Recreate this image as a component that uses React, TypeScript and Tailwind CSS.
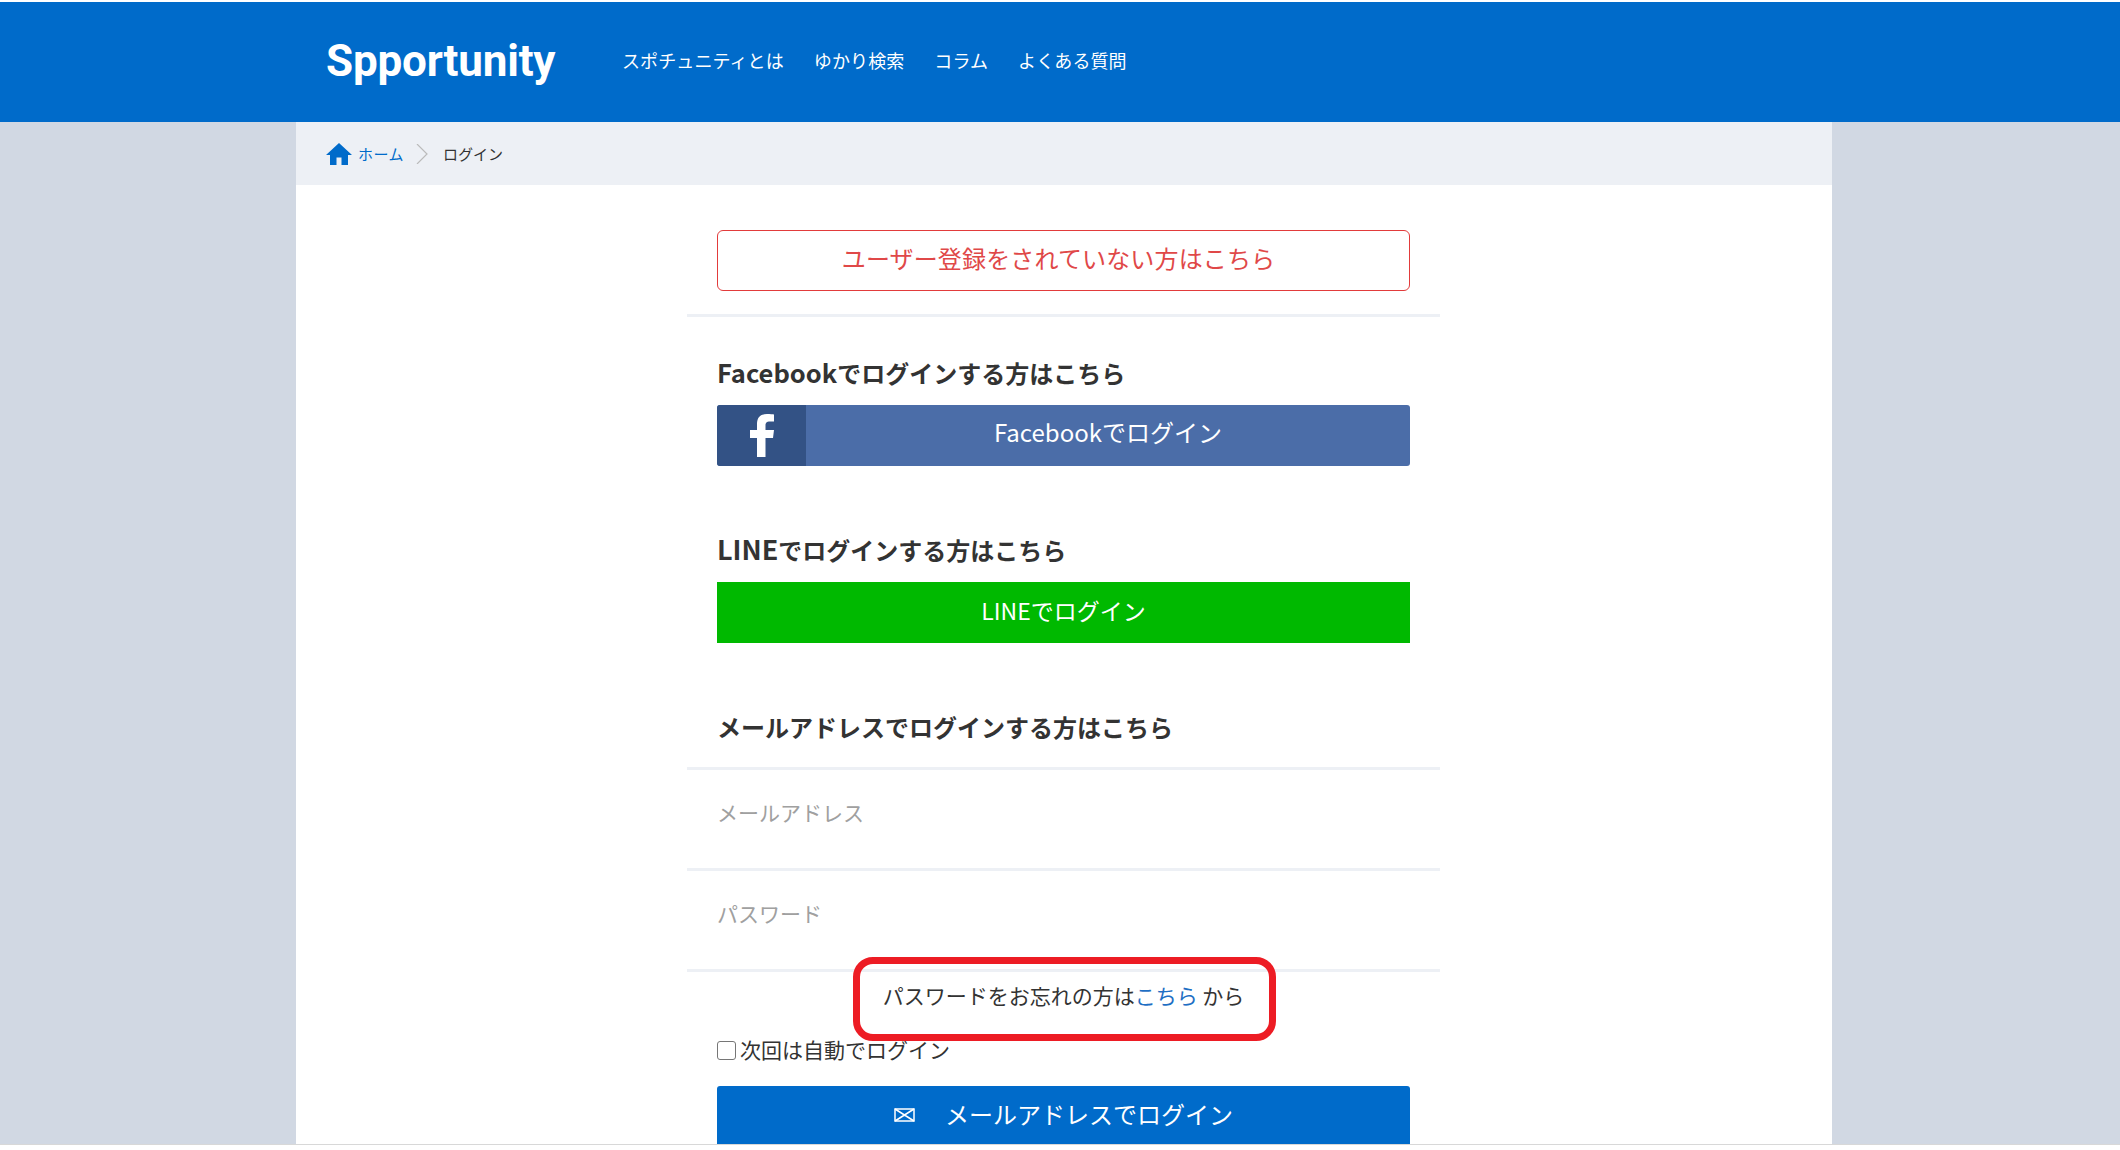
const JP = "font-['Noto_Sans_CJK_JP','Noto_Sans',sans-serif]"

const NAV_ITEMS = ['スポチュニティとは', 'ゆかり検索', 'コラム', 'よくある質問']

function HomeIcon() {
  return (
    <svg width="26" height="22" viewBox="0 0 26 22" className="shrink-0">
      <path d="M13 0 L26 12 H22 V22 H15.5 V14.5 H10.5 V22 H4 V12 H0 Z" fill="#006bca" />
    </svg>
  )
}

function FacebookIcon() {
  return (
    <svg width="25" height="43" viewBox="0 0 25 43" className="ml-[2px]">
      <path
        d="M7 43 V24 H0 V16 H7 V10 C7 3 11 0 17 0 C20 0 23 .3 24 .5 V7.5 H20 C16.500 7.500 15.500 9 15.500 11.500 V16 H24 L23 24 H15.500 V43 Z"
        fill="#fff"
      />
    </svg>
  )
}

function MailIcon() {
  return (
    <svg width="21" height="14" viewBox="0 0 21 14" fill="none" stroke="#fff" strokeWidth="1.500" className="mt-[3px]">
      <rect x="1" y="1" width="19" height="12" />
      <path d="M1 1 L20 13 M20 1 L1 13" />
    </svg>
  )
}

function Heading({ children }: { children: React.ReactNode }) {
  return <h2 className="mx-[30px] h-[34px] text-[24px] leading-[30px] font-bold text-[#333]">{children}</h2>
}

function Divider({ className = '' }: { className?: string }) {
  return <div className={`h-[3px] bg-[#edf0f5] ${className}`} />
}

function Field({ placeholder, type }: { placeholder: string; type: string }) {
  return (
    <div className="h-[98px] px-[30px] pb-[14px]">
      <input
        type={type}
        placeholder={placeholder}
        className="h-full w-full bg-transparent text-[21px] text-[#333] outline-none placeholder:text-[#a0a0a0]"
      />
    </div>
  )
}

export default function App() {
  return (
    <div className={`flex h-[1150px] flex-col overflow-hidden bg-white ${JP}`}>
      <header className="mt-[2px] flex h-[120px] shrink-0 items-center bg-[#006bca] pl-[326px] text-white">
        <a className="w-[296px] pb-[2px] font-['Roboto',sans-serif] text-[44px] leading-none font-bold tracking-[-0.2px]">
          Spportunity
        </a>
        <nav className="flex gap-[30px] pb-[3px] text-[18px] tracking-[0.1px]">
          {NAV_ITEMS.map((item) => (
            <a key={item}>{item}</a>
          ))}
        </nav>
      </header>

      <div className="min-h-0 flex-1 bg-[#d1d8e3] pl-[296px]">
        <div className="h-full w-[1536px] bg-white">
          <div className="flex h-[63px] items-center bg-[#edf0f5] pt-[1px] pl-[30px] text-[15px]">
            <HomeIcon />
            <a className="ml-[6px] tracking-[0.5px] text-[#006bca]">ホーム</a>
            <svg width="12" height="20" viewBox="0 0 12 20" fill="none" stroke="#bbb" strokeWidth="1.200" className="mr-[15px] ml-[12px]">
              <path d="M1 0 L11 10 L1 20" />
            </svg>
            <span className="text-[#333]">ログイン</span>
          </div>

          <main className="relative ml-[391px] w-[753px] pt-[45px]">
            <a className="mx-[30px] flex h-[61px] items-center justify-center rounded-[6px] border border-[#e23b3b] pr-[10px] pb-[5px] text-[24px] tracking-[0.15px] text-[#e04848]">
              ユーザー登録をされていない方はこちら
            </a>
            <Divider className="mt-[23px]" />

            <div className="mt-[40px]">
              <Heading><span className="text-[25.5px]">Facebook</span>でログインする方はこちら</Heading>
            </div>
            <a className="mx-[30px] mt-[14px] flex h-[61px] overflow-hidden rounded-[3px] bg-[#4b6da8] text-[24px] text-white">
              <span className="flex w-[89px] items-center justify-center bg-[#335285]">
                <FacebookIcon />
              </span>
              <span className="flex flex-1 items-center justify-center pb-[7px]">Facebookでログイン</span>
            </a>

            <div className="mt-[68px]">
              <Heading><span className="text-[27px]">LINE</span>でログインする方はこちら</Heading>
            </div>
            <a className="mx-[30px] mt-[14px] flex h-[61px] items-center justify-center bg-[#00b900] pb-[5px] text-[23px] text-white">
              LINEでログイン
            </a>

            <div className="mt-[69px]">
              <Heading>メールアドレスでログインする方はこちら</Heading>
            </div>
            <Divider className="mt-[21px]" />
            <Field placeholder="メールアドレス" type="email" />
            <Divider />
            <Field placeholder="パスワード" type="password" />
            <Divider />

            <p className="mt-[8px] h-[30px] text-center text-[21px] leading-[30px] text-[#333]">
              パスワードをお忘れの方は<a className="text-[#1f6fc4]">こちら</a> から
            </p>

            <label className="mx-[30px] mt-[25px] flex h-[30px] items-center gap-[4px] text-[21px] text-[#333]">
              <input type="checkbox" className="h-[19px] w-[19px] appearance-none rounded-[3px] border border-[#767676] bg-white" />
              次回は自動でログイン
            </label>

            <a className="mx-[30px] mt-[21px] flex h-[58px] items-center justify-center gap-[30px] rounded-t-[3px] bg-[#006bca] pb-[3px] text-[24px] text-white">
              <MailIcon />
              メールアドレスでログイン
            </a>

            {/* annotation drawn over the screenshot */}
            <div className="absolute top-[772px] left-[166px] h-[84px] w-[423px] rounded-[20px] border-[7px] border-[#ed1c24]" />
          </main>
        </div>
      </div>

      <div className="h-[6px] shrink-0 border-t border-[#d8d8d8] bg-white" />
    </div>
  )
}
